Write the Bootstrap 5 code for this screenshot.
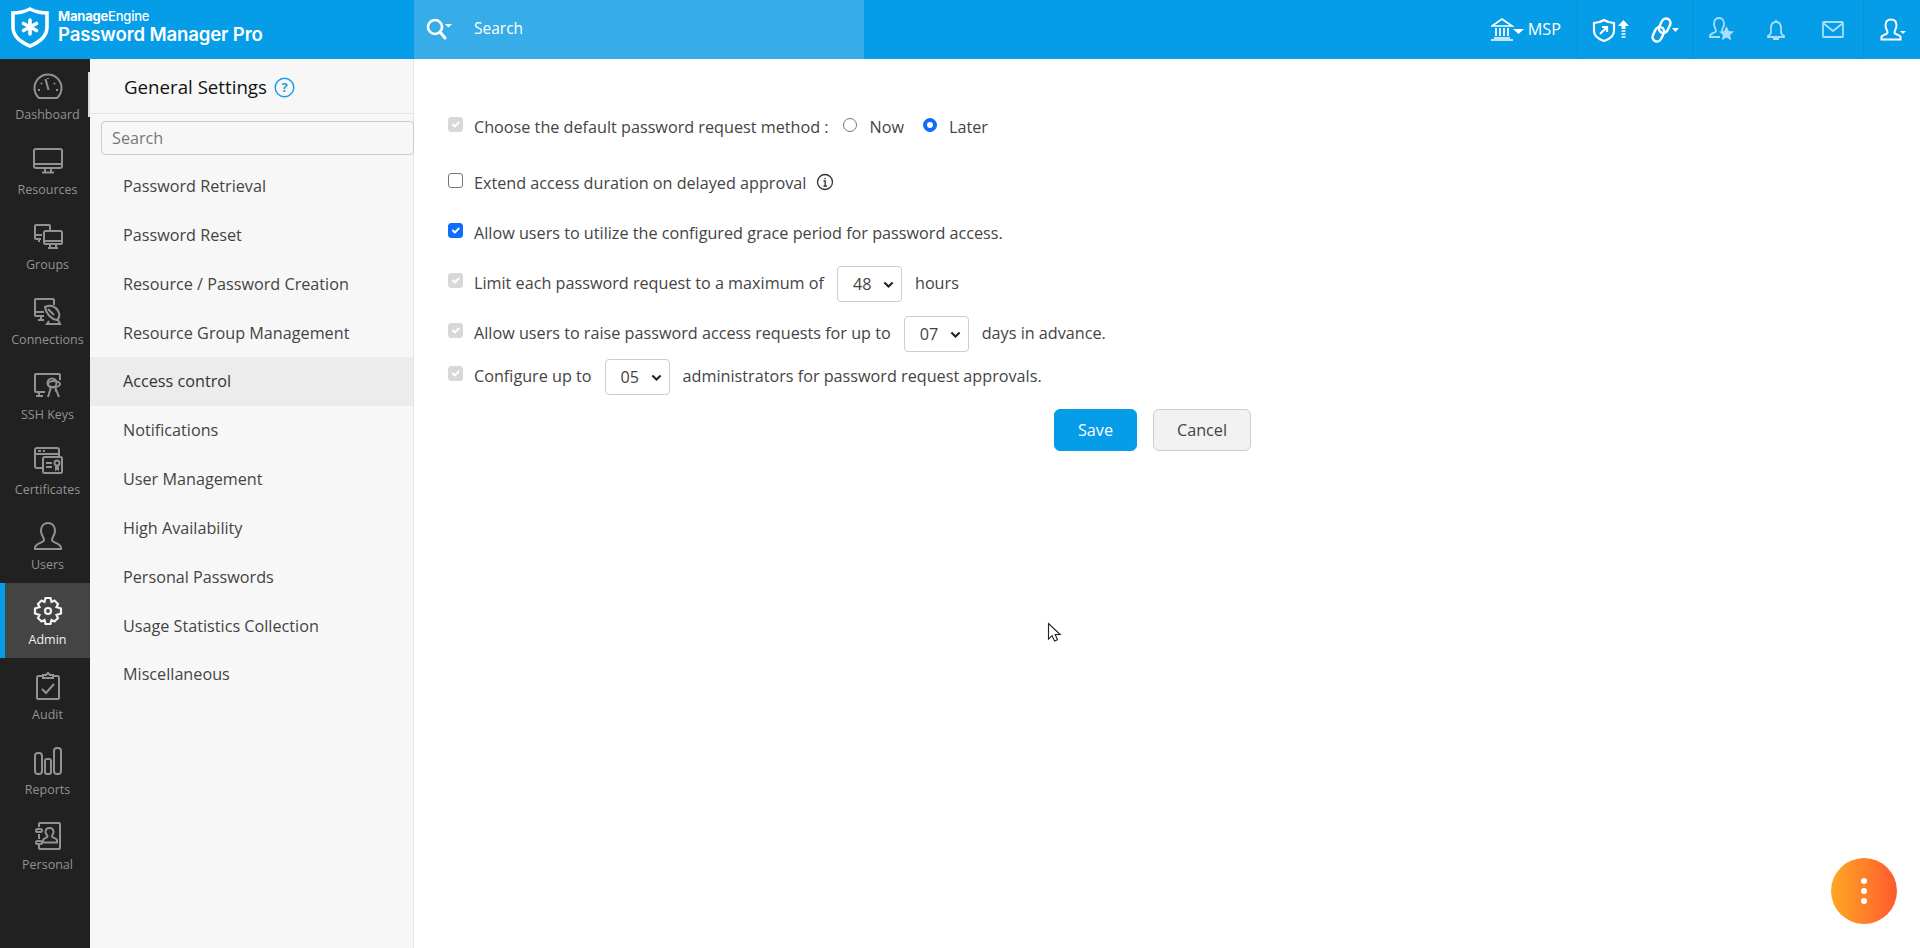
<!DOCTYPE html>
<html lang="en">
<head>
<meta charset="utf-8">
<title>Password Manager Pro</title>
<link href="https://cdn.jsdelivr.net/npm/bootstrap@5.3.0/dist/css/bootstrap.min.css" rel="stylesheet">
<style>
html,body{height:100%;overflow:hidden}
body{font-family:"Open Sans","Liberation Sans",sans-serif;font-size:16.2px;color:#444;background:#fff}
.app-top{height:59px;background:#059ce8;color:#fff;flex:none}
.brand-box{width:414px;padding-left:10px;gap:8px;padding-bottom:5px}
.brand-box svg{flex:none}
.brand-sm{font-family:"Inter","Liberation Sans",sans-serif;font-weight:700;font-size:13px;line-height:14px;letter-spacing:-.2px}
.brand-lg{font-family:"Inter","Liberation Sans",sans-serif;font-weight:600;font-size:18.6px;line-height:22px;letter-spacing:-.15px}
.brand-sm b{font-weight:700}.brand-sm span{font-weight:500}
.top-search{width:450px;background:#36ace9;padding-left:11px;padding-bottom:2px;gap:22px;font-size:15.5px}
.top-grp{height:59px;border-left:1px solid #0b8fd3}
.grp-msp{gap:4px;padding-right:16px;font-size:16.2px}
.grp-a{width:115px;padding-left:14px;gap:22px}
.grp-b{width:171px;padding-left:16px;gap:33px}
.grp-c{width:57px;padding-left:16px}
.rail{width:90px;background:#212121;flex:none}
.rail-item{height:75px;padding:12px 0 0 5px;color:#929292;font-size:12.5px;line-height:18px;text-align:center;display:block;text-decoration:none}
.rail-item svg{display:block;margin:0 auto 5px}
.rail-on{background:#444;color:#f1f1f1;box-shadow:inset 5px 0 0 #059ce8;margin:-1px 0 1px;padding-top:13px}
.sub-nav{width:324px;background:#f7f7f7;border-right:1px solid #e4e4e4;flex:none;position:relative}
.sub-head{height:55px;border-bottom:1px solid #e4e4e4;padding:2px 0 0 34px;gap:7px;font-size:18.7px;color:#111}
.sub-edge{position:absolute;left:-2px;top:13px;width:2px;height:45px;background:#dcdcdc}
.sub-find{margin:7px 0 0 11px;height:34px;width:313px;border:1px solid #ccc;border-radius:4px;background:#f7f7f7;font-size:16.2px;padding:0 10px;color:#777}
.sub-find::placeholder{color:#777}
.sub-find:focus{outline:0}
.sub-list{margin-top:7px}
.sub-link{display:block;height:48.85px;line-height:48.5px;padding-left:33px;font-size:16.2px;color:#444;text-decoration:none}
.sub-active{background:#ececec;color:#333}
.work{padding:50px 0 0 35px;min-width:0}
.opt-row{height:36px;display:flex;align-items:center;white-space:nowrap}
.opt-row>span{padding-top:1px}
.gap-a{margin-bottom:20px}.gap-b{margin-bottom:14px}.gap-c{margin-bottom:7px}
.opt-row .form-check-input{width:15px;height:15px;margin:-5px 11px 0 -1px;flex:none;border-color:#767676;border-radius:3px}
.opt-row .form-check-input[type=radio]{border-radius:50%;margin:-4px 0 0 0;width:14px;height:14px}
.opt-row .form-check-input:disabled{opacity:1;background-color:#d8d8d8;border-color:#d8d8d8}
.opt-row .form-check-input:checked:not(:disabled){background-color:#0d6efd;border-color:#0d6efd}
.opt-row .form-check-input.rad-now{margin-left:14px}
.opt-row .form-check-input.rad-later{margin-left:19px}
.rad-txt{margin-left:13px}
.rad-txt-b{margin-left:12px}
.sel-sm{width:65px;height:36px;font-size:16.2px;line-height:1;color:#444;padding:0 22px 0 15px;margin:2px 13px 0;background-image:url("data:image/svg+xml,%3csvg xmlns='http://www.w3.org/2000/svg' viewBox='0 0 16 16'%3e%3cpath fill='none' stroke='%23222' stroke-width='3' d='M2 5l6 6 6-6'/%3e%3c/svg%3e");background-position:right 7px center;background-size:11px 11px;border-color:#ccc;border-radius:4px;flex:none}
.info-ic{margin:0 0 2px 10px}
.act-row{margin:15px 0 0 605px;gap:16px}
.btn-keep{width:83px;height:42px;background:#059ce8;border:1px solid #059ce8;color:#fff;font-size:16.2px;padding:0;font-weight:500}
.btn-drop{width:98px;height:42px;background:#f2f2f2;border:1px solid #ccc;color:#444;font-size:16.2px;padding:0}
.fab{position:absolute;left:1831px;top:858px;width:66px;height:66px;border-radius:50%;background:linear-gradient(90deg,#ffa724,#ff5a2e);gap:4px}
.fab i{display:block;width:6px;height:6px;border-radius:50%;background:#fff}
.ptr{position:absolute;left:1047px;top:622px}
</style>
</head>
<body>
<div class="d-flex flex-column vh-100 position-relative">
  <header class="app-top d-flex align-items-center">
    <div class="brand-box d-flex align-items-center">
      <svg width="40" height="42" viewBox="0 0 40 42"><path d="M20 3C26 6 32 7 37 7V21C37 30 30 36 20 40C10 36 3 30 3 21V7C8 7 14 6 20 3Z" fill="none" stroke="#fff" stroke-width="3.600"/><path d="M20 14v14M13.500 17.500l13 7M26.500 17.500l-13 7" stroke="#fff" stroke-width="3.600" stroke-linecap="round"/></svg>
      <div><div class="brand-sm"><b>Manage</b><span>Engine</span></div><div class="brand-lg">Password Manager Pro</div></div>
    </div>
    <div class="top-search d-flex align-items-center h-100">
      <svg width="27" height="24" viewBox="0 0 27 24"><circle cx="10" cy="10" r="7" fill="none" stroke="#fff" stroke-width="2.600"/><path d="M15 15l5 6" stroke="#fff" stroke-width="3" stroke-linecap="round"/><path d="M20 7h7l-3.500 3.500z" fill="#fff"/></svg>
      <span>Search</span>
    </div>
    <div class="flex-grow-1"></div>
    <div class="grp-msp d-flex align-items-center">
      <svg width="33" height="24" viewBox="0 0 33 24" fill="none" stroke="#fff" stroke-width="1.700"><path d="M1 9L11 2l10 7zM3 21h16M0 23h22M5 11v8M9 11v8M13 11v8M17 11v8"/><path d="M22 12h11l-5.500 5z" fill="#fff" stroke="none"/></svg>
      <span>MSP</span>
    </div>
    <div class="top-grp grp-a d-flex align-items-center">
      <svg width="37" height="24" viewBox="0 0 37 24" fill="none" stroke="#fff" stroke-width="2.200"><path d="M12 2c3 2 7 3 10 3v8c0 5-4 8-10 10C6 21 2 18 2 13V5c3 0 7-1 10-3z"/><path d="M8 16l7-7M10 9h5v5"/><path d="M31.500 2l5.500 6h-3.500v3h-4V8H26z" fill="#fff" stroke="none"/><path d="M29.500 13h4M29.500 16h4M29.500 19h4" stroke-width="1.300"/></svg>
      <svg width="28" height="26" viewBox="0 0 28 26" fill="none" stroke="#fff" stroke-width="2.400"><rect x="9" y="1" width="9" height="15" rx="4.500" transform="rotate(25 13 9)"/><rect x="3" y="10" width="9" height="15" rx="4.500" transform="rotate(25 8 17)"/><path d="M21 11h7l-3.500 4z" fill="#fff" stroke="none"/></svg>
    </div>
    <div class="top-grp grp-b d-flex align-items-center">
      <svg width="25" height="25" viewBox="0 0 25 25" fill="none" stroke="#a6e0fb" stroke-width="1.800"><path d="M10 1c3.500 0 5 3 5 6 0 3-2 5-2 7M10 1C6.500 1 5 4 5 7c0 3 2 5 2 7 0 2-6 2-6 5v1h10"/><path d="M17.500 9l2.300 5 5.200.500-4 3.500 1.200 5.200-4.700-2.700-4.700 2.700 1.200-5.200-4-3.500 5.200-.500z" fill="#a6e0fb" stroke="none"/></svg>
      <svg width="18" height="22" viewBox="0 0 18 22" fill="none" stroke="#a6e0fb" stroke-width="1.800"><path d="M9 3C5 3 4 6 4 9v4c0 2-1 3-3 4v1h16v-1c-2-1-3-2-3-4V9c0-3-1-6-5-6zM9 3V1M6 20h6"/></svg>
      <svg class="ms-1" width="22" height="17" viewBox="0 0 22 17" fill="none" stroke="#a6e0fb" stroke-width="1.800"><rect x="1" y="1" width="20" height="15" rx="1"/><path d="M1 2l10 8 10-8"/></svg>
    </div>
    <div class="top-grp grp-c d-flex align-items-center">
      <svg width="26" height="23" viewBox="0 0 26 23" fill="none" stroke="#fff" stroke-width="2"><path d="M11 1.500c4 0 5.500 3 5.500 6 0 3-2 5-2 7 0 2 5 2.500 6 4v3H1.500v-3c1-1.500 6-2 6-4 0-2-2-4-2-7 0-3 1.500-6 5.500-6z"/><path d="M20 13h6l-3 3z" fill="#fff" stroke="none"/></svg>
    </div>
  </header>
  <div class="d-flex flex-grow-1" style="min-height:0">
    <nav class="rail">
      <a class="rail-item" href="#"><svg width="30" height="30" viewBox="0 0 30 30" fill="none" stroke="currentColor" stroke-width="2"><path d="M6 27A13.500 13.500 0 1 1 24 27z"/><path d="M12.500 8l3 11M15 7v1M8 12l1 1M22 12l-1 1M5 19h2M23 19h2"/></svg>Dashboard</a>
      <a class="rail-item" href="#"><svg width="30" height="30" viewBox="0 0 30 30" fill="none" stroke="currentColor" stroke-width="2"><rect x="1" y="3" width="28" height="19" rx="2"/><path d="M1 18h28M12 22v4M18 22v4M9 26.500h12"/></svg>Resources</a>
      <a class="rail-item" href="#"><svg width="30" height="30" viewBox="0 0 30 30" fill="none" stroke="currentColor" stroke-width="2"><path d="M8 18H3a1 1 0 0 1-1-1V5a1 1 0 0 1 1-1h13a1 1 0 0 1 1 1v4M2 14h7M6 18v3"/><rect x="11" y="10" width="18" height="13" rx="1.500"/><path d="M11 20h18M17 23v3M23 23v3M15 27h10"/></svg>Groups</a>
      <a class="rail-item" href="#"><svg width="30" height="30" viewBox="0 0 30 30" fill="none" stroke="currentColor" stroke-width="2"><path d="M11 20H3a1 1 0 0 1-1-1V4a1 1 0 0 1 1-1h17a1 1 0 0 1 1 1v5M2 16h9M8 20v4M5 24h6"/><path d="M12 11c1 7 6 12 12 13 2-2 3-4 2-7-1-3-4-6-7-7-3-1-5 0-7 1zM15 13l6 6M16 25l-2 3h13l-2-4"/></svg>Connections</a>
      <a class="rail-item" href="#"><svg width="30" height="30" viewBox="0 0 30 30" fill="none" stroke="currentColor" stroke-width="2"><path d="M12 21H3a1 1 0 0 1-1-1V4a1 1 0 0 1 1-1h23a1 1 0 0 1 1 1v5M6 21v4M3 25h7"/><circle cx="19" cy="12" r="4.500"/><ellipse cx="21" cy="13" rx="6" ry="3"/><path d="M18 16l-3 10M22 16l4 10M22 20l2-1"/></svg>SSH Keys</a>
      <a class="rail-item" href="#"><svg width="30" height="30" viewBox="0 0 30 30" fill="none" stroke="currentColor" stroke-width="2"><path d="M9 22H4a2 2 0 0 1-2-2V4a2 2 0 0 1 2-2h20a2 2 0 0 1 2 2v6M2 8h24M5 5h3M10 5h2"/><rect x="10" y="11" width="19" height="16" rx="1.500"/><path d="M13 17h6M13 21h6"/><circle cx="24" cy="17" r="2.500"/><path d="M23 20v3l1-1 1 1v-3"/></svg>Certificates</a>
      <a class="rail-item" href="#"><svg width="30" height="30" viewBox="0 0 30 30" fill="none" stroke="currentColor" stroke-width="2"><path d="M15 2c5 0 7 4 7 8 0 4-3 6-3 9 0 3 9 3 9 8v1H2v-1c0-5 9-5 9-8 0-3-3-5-3-9 0-4 2-8 7-8z"/></svg>Users</a>
      <a class="rail-item rail-on" href="#"><svg width="30" height="30" viewBox="0 0 30 30" fill="none" stroke="currentColor" stroke-width="2.200"><path d="M12.500 2h5l1 4 3-1.500 3.500 3.500L23.500 11l4.500 1.500v5L23.500 19l1.500 3-3.500 3.500-3-1.500-1 4h-5l-1-4-3 1.500L5 22l1.500-3L2 17.500v-5L6.500 11 5 8l3.500-3.500 3 1.500z"/><circle cx="15" cy="15" r="3"/></svg>Admin</a>
      <a class="rail-item" href="#"><svg width="30" height="30" viewBox="0 0 30 30" fill="none" stroke="currentColor" stroke-width="2"><path d="M10 5H6a2 2 0 0 0-2 2v20a1 1 0 0 0 1 1h20a1 1 0 0 0 1-1V7a2 2 0 0 0-2-2h-4"/><path d="M10 7V4h3l2-2 2 2h3v3z"/><path d="M9 18l4 4 8-9"/></svg>Audit</a>
      <a class="rail-item" href="#"><svg width="30" height="30" viewBox="0 0 30 30" fill="none" stroke="currentColor" stroke-width="2"><rect x="2" y="7" width="7" height="21" rx="3"/><rect x="12" y="13" width="6" height="15" rx="2"/><rect x="21" y="2" width="7" height="26" rx="3"/></svg>Reports</a>
      <a class="rail-item" href="#"><svg width="30" height="30" viewBox="0 0 30 30" fill="none" stroke="currentColor" stroke-width="2"><path d="M6 6V3a1 1 0 0 1 1-1h19a1 1 0 0 1 1 1v24a1 1 0 0 1-1 1H7a1 1 0 0 1-1-1v-3M6 18v-5"/><rect x="3" y="8" width="6" height="3" rx="1.500"/><rect x="3" y="20" width="6" height="3" rx="1.500"/><path d="M16.500 7c3 0 4 2 4 4 0 2-1.500 3-1.500 4.500 0 1.500 5 1.500 5 4v2H10v-2c0-2.500 4.500-2.500 4.500-4 0-1.500-2-2.500-2-4.500 0-2 1-4 4-4z"/></svg>Personal</a>
    </nav>
    <aside class="sub-nav">
      <div class="sub-edge"></div>
      <div class="sub-head d-flex align-items-center">General Settings
        <svg width="21" height="21" viewBox="0 0 21 21"><circle cx="10.500" cy="10.500" r="9.300" fill="none" stroke="#1a9fe8" stroke-width="1.500"/><text x="10.500" y="15" text-anchor="middle" font-size="13" font-weight="700" fill="#1a9fe8" font-family="Open Sans">?</text></svg>
      </div>
      <input class="sub-find d-block" type="text" placeholder="Search">
      <div class="sub-list">
        <a class="sub-link" href="#">Password Retrieval</a>
        <a class="sub-link" href="#">Password Reset</a>
        <a class="sub-link" href="#">Resource / Password Creation</a>
        <a class="sub-link" href="#">Resource Group Management</a>
        <a class="sub-link sub-active" href="#">Access control</a>
        <a class="sub-link" href="#">Notifications</a>
        <a class="sub-link" href="#">User Management</a>
        <a class="sub-link" href="#">High Availability</a>
        <a class="sub-link" href="#">Personal Passwords</a>
        <a class="sub-link" href="#">Usage Statistics Collection</a>
        <a class="sub-link" href="#">Miscellaneous</a>
      </div>
    </aside>
    <main class="work flex-grow-1">
      <div class="opt-row gap-a">
        <input class="form-check-input" type="checkbox" checked disabled>
        <span>Choose the default password request method :</span>
        <input class="form-check-input rad-now" type="radio" name="m"><span class="rad-txt">Now</span>
        <input class="form-check-input rad-later" type="radio" name="m" checked><span class="rad-txt-b">Later</span>
      </div>
      <div class="opt-row gap-b">
        <input class="form-check-input" type="checkbox">
        <span>Extend access duration on delayed approval</span>
        <svg class="info-ic" width="18" height="18" viewBox="0 0 18 18" fill="none" stroke="#333" stroke-width="1.300"><circle cx="9" cy="9" r="7.500"/><path d="M7.500 8H9.200V13M7.500 13h3.500M9 5v1.300"/></svg>
      </div>
      <div class="opt-row gap-b">
        <input class="form-check-input" type="checkbox" checked>
        <span>Allow users to utilize the configured grace period for password access.</span>
      </div>
      <div class="opt-row gap-b">
        <input class="form-check-input" type="checkbox" checked disabled>
        <span>Limit each password request to a maximum of</span>
        <select class="form-select sel-sm"><option>48</option></select>
        <span>hours</span>
      </div>
      <div class="opt-row gap-c">
        <input class="form-check-input" type="checkbox" checked disabled>
        <span>Allow users to raise password access requests for up to</span>
        <select class="form-select sel-sm"><option>07</option></select>
        <span>days in advance.</span>
      </div>
      <div class="opt-row">
        <input class="form-check-input" type="checkbox" checked disabled>
        <span>Configure up to</span>
        <select class="form-select sel-sm"><option>05</option></select>
        <span>administrators for password request approvals.</span>
      </div>
      <div class="act-row d-flex">
        <button class="btn btn-keep" type="button">Save</button>
        <button class="btn btn-drop" type="button">Cancel</button>
      </div>
    </main>
  </div>
  <div class="fab d-flex flex-column align-items-center justify-content-center"><i></i><i></i><i></i></div>
  <svg class="ptr" width="16" height="22" viewBox="0 0 16 22"><path d="M1.500 1.500V17l3.700-3.400 2.300 5.500 3-1.300-2.300-5.300h5z" fill="#fff" stroke="#222" stroke-width="1.100"/></svg>
</div>
<script src="https://cdn.jsdelivr.net/npm/bootstrap@5.3.0/dist/js/bootstrap.bundle.min.js"></script>
</body>
</html>
